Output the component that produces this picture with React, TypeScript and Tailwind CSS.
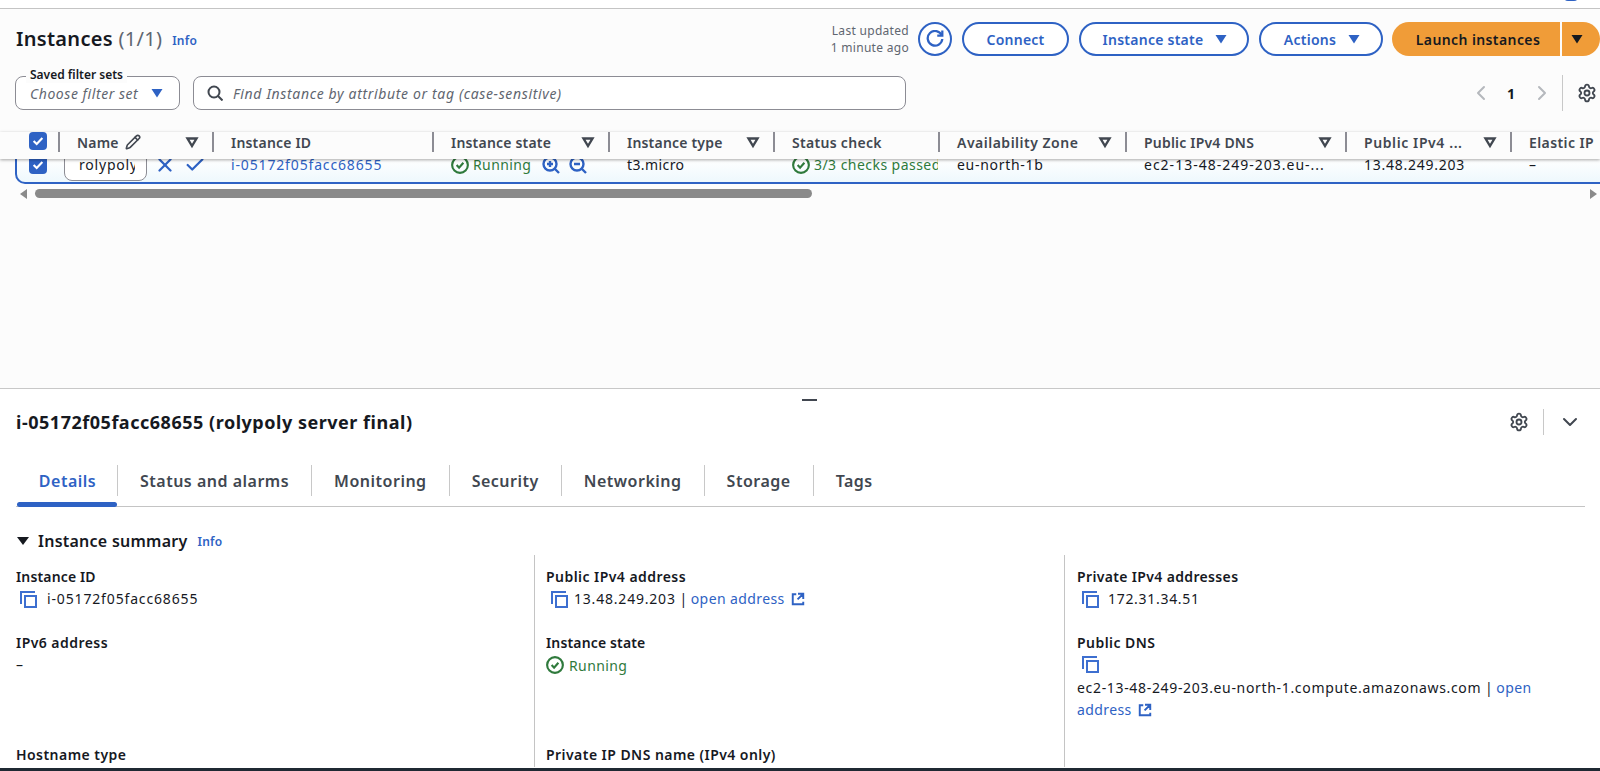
import { Check, ChevronDown, ChevronLeft, ChevronRight, Pencil, Settings, X } from "lucide-react";
import type { ReactNode } from "react";

const columns = "grid-cols-[41px_154px_220px_176px_165px_165px_187px_220px_165px_90px]";

function Caret({ className = "text-[#2e62c4]" }: { className?: string }) {
  return (
    <svg viewBox="0 0 16 16" className={`h-4 w-4 ${className}`} fill="currentColor">
      <path d="M2.5 4h11L8 12.5z" />
    </svg>
  );
}

function FilterCaret() {
  return (
    <svg viewBox="0 0 16 16" className="h-4 w-4 text-[#414750]" fill="none" stroke="currentColor" strokeWidth="2.4">
      <path d="M3.5 4.5h9L8 12z" />
    </svg>
  );
}

function CopyIcon() {
  return (
    <svg viewBox="0 0 18 18" className="h-[18px] w-[18px] shrink-0 text-[#3d6fd0]" fill="none" stroke="currentColor" strokeWidth="2">
      <path d="M2 14V2h14" />
      <rect x="6" y="6" width="11" height="11" />
    </svg>
  );
}

function ExternalIcon() {
  return (
    <svg viewBox="0 0 16 16" className="ml-[6px] inline-block h-[14px] w-[14px] align-[-2px] text-[#2e62c4]" fill="none" stroke="currentColor" strokeWidth="2.2">
      <path d="M14 8V2H8M14 2 7.5 8.5M6 2.5H2V14h12v-3" />
    </svg>
  );
}

function StatusIcon() {
  return (
    <svg viewBox="0 0 16 16" className="h-[18px] w-[18px] shrink-0 text-[#2f7a3c]" fill="none" stroke="currentColor" strokeWidth="1.9">
      <circle cx="8" cy="8" r="7" />
      <path d="m5 8 2.2 2.4L11 6" />
    </svg>
  );
}

function ZoomIcon({ plus }: { plus?: boolean }) {
  return (
    <svg viewBox="0 0 18 18" className="h-[18px] w-[18px] text-[#2e62c4]" fill="none" stroke="currentColor" strokeWidth="2.4">
      <circle cx="8" cy="8" r="6.5" />
      <path d="m12.5 12.5 4.5 4.5M5 8h6" />
      {plus && <path d="M8 5v6" />}
    </svg>
  );
}

function CheckBox() {
  return (
    <span className="flex h-[18px] w-[18px] items-center justify-center rounded-[4px] bg-[#2e62c4]">
      <svg viewBox="0 0 16 16" className="h-[14px] w-[14px]" fill="none" stroke="white" strokeWidth="2.4">
        <path d="m3 8 3.5 3.5L13 4.5" />
      </svg>
    </span>
  );
}

function Head({ label, filter, track = "tracking-[0.2px]", children }: { label: string; filter?: boolean; track?: string; children?: ReactNode }) {
  return (
    <div className="flex h-[20px] items-center">
      <span className="h-[20px] w-[2px] shrink-0 bg-[#8c8c94]" />
      <span className={`ml-[17px] text-[14px] font-semibold text-[#414750] ${track}`}>{label}</span>
      {children}
      {filter && (
        <span className="ml-auto mr-[12px]">
          <FilterCaret />
        </span>
      )}
    </div>
  );
}

function OutlineButton({ label, caret, width }: { label: string; caret?: boolean; width: string }) {
  return (
    <button className={`flex h-[34px] items-center justify-center gap-[10px] rounded-full border-2 border-[#2e62c4] bg-white text-[14px] font-semibold tracking-[0.25px] text-[#2e62c4] ${width} ${caret ? "pl-[4px]" : ""}`}>
      {label}
      {caret && <Caret />}
    </button>
  );
}

function Label({ children, track = "tracking-[0.45px]" }: { children: ReactNode; track?: string }) {
  return <div className={`h-[20px] text-[14px] leading-[20px] font-semibold text-[#16191f] ${track}`}>{children}</div>;
}

function Copyable({ value, link, pad, track, gap = "gap-[9px]" }: { value: string; link?: boolean; pad: string; track: string; gap?: string }) {
  return (
    <div className={`mt-[2px] flex h-[20px] items-center text-[14px] leading-[20px] ${gap} ${pad}`}>
      <CopyIcon />
      <span className="tracking-[0.4px]">
        <span className={track}>{value}</span>
        {link && (
          <>
            <span className="tracking-normal">{" | "}</span>
            <span className="text-[#2e62c4]">
              open address
              <ExternalIcon />
            </span>
          </>
        )}
      </span>
    </div>
  );
}

export default function App() {
  const tabs = ["Status and alarms", "Monitoring", "Security", "Networking", "Storage", "Tags"];

  return (
    <div className="relative flex h-[771px] w-[1600px] flex-col overflow-hidden bg-white font-['Noto_Sans',sans-serif] text-[#16191f]">
      <div className="relative h-[9px] border-b border-[#c4c4c4] bg-white">
        <span className="absolute top-[-7px] left-[1564px] h-[8px] w-[14px] rounded-full bg-[#2e62c4]" />
      </div>

      <section className="h-[380px] border-b border-[#c8c8c8] bg-[#fcfcfc]">
        <div className="flex items-center pt-[13px] pr-0 pl-[16px]">
          <h1 className="text-[20px] leading-[34px] font-semibold tracking-[0.3px]">
            Instances <span className="font-normal text-[#5f6670]">(1/1)</span>
          </h1>
          <span className="mt-[3px] ml-[10px] text-[12px] font-semibold tracking-[0.2px] text-[#2e62c4]">Info</span>
          <div className="ml-auto mr-[9px] text-right text-[12px] leading-[17px] tracking-[0.3px] text-[#5f6670]">
            <div>Last updated</div>
            <div>1 minute ago</div>
          </div>
          <button className="flex h-[34px] w-[34px] items-center justify-center rounded-full border-2 border-[#2e62c4] bg-white text-[#2e62c4]">
            <svg viewBox="0 0 16 16" className="h-[18px] w-[18px]" fill="none" stroke="currentColor" strokeWidth="2">
              <path d="M10 5h4.5V.5" />
              <path d="M14.5 8A6.5 6.5 0 1 1 14 4.8" />
            </svg>
          </button>
          <div className="ml-[10px] flex items-center gap-[10px]">
            <OutlineButton label="Connect" width="w-[107px]" />
            <OutlineButton label="Instance state" caret width="w-[170px]" />
            <OutlineButton label="Actions" caret width="w-[124px]" />
          </div>
          <div className="ml-[9px] flex h-[34px] items-center">
            <button className="h-[34px] w-[168px] rounded-l-full bg-[#f09c38] pl-[4px] text-[14px] font-semibold tracking-[0.4px] text-[#16191f]">Launch instances</button>
            <button className="ml-[2px] flex h-[34px] w-[38px] items-center rounded-r-full bg-[#f09c38] pl-[7px]">
              <Caret className="text-[#16191f]" />
            </button>
          </div>
        </div>

        <div className="mt-[20px] flex h-[34px] items-center pl-[15px]">
          <div className="relative flex h-[34px] w-[165px] items-center justify-between rounded-[8px] border border-[#8c8c94] bg-white pr-[14px] pl-[14px] text-[14px] tracking-[0.55px] text-[#5f6670] italic">
            <span className="absolute top-[-11px] left-[10px] bg-[#fcfcfc] px-[4px] text-[12px] leading-[17px] font-semibold tracking-normal text-[#16191f] not-italic">Saved filter sets</span>
            Choose filter set
            <Caret />
          </div>
          <div className="ml-[13px] flex h-[34px] w-[713px] items-center rounded-[8px] border border-[#8c8c94] bg-white pl-[13px] text-[14px] tracking-[0.65px] text-[#5f6670] italic">
            <svg viewBox="0 0 16 16" className="mr-[10px] h-[16px] w-[16px] text-[#414750]" fill="none" stroke="currentColor" strokeWidth="2">
              <circle cx="7" cy="7" r="5.5" />
              <path d="m11 11 4.5 4.5" />
            </svg>
            Find Instance by attribute or tag (case-sensitive)
          </div>
          <ChevronLeft className="ml-[563px] h-[24px] w-[24px] text-[#b5b8bd]" />
          <span className="ml-[14px] w-[10px] text-[14px] font-bold">1</span>
          <ChevronRight className="ml-[13px] h-[24px] w-[24px] text-[#b5b8bd]" />
          <span className="ml-[8px] h-[36px] w-px bg-[#c8c8c8]" />
          <Settings className="ml-[14px] h-[20px] w-[20px] shrink-0 text-[#414750]" strokeWidth={2.2} />
        </div>

        <div className={`relative z-10 mt-[22px] grid h-[27px] w-[1600px] pl-[17px] shadow-[0_1px_3px_rgba(0,0,0,0.35)] ${columns}`}>
          <div className="pl-[12px]">
            <CheckBox />
          </div>
          <Head label="Name" filter>
            <Pencil className="ml-[6px] h-[16px] w-[16px] text-[#414750]" strokeWidth={2.4} />
          </Head>
          <Head label="Instance ID" />
          <Head label="Instance state" filter />
          <Head label="Instance type" filter />
          <Head label="Status check" track="tracking-[0.3px]" />
          <Head label="Availability Zone" filter track="tracking-[0.5px]" />
          <Head label="Public IPv4 DNS" filter />
          <Head label="Public IPv4 ..." filter track="tracking-[0.6px]" />
          <Head label="Elastic IP" track="tracking-[0.4px]" />
        </div>

        <div className="ml-[15px] h-[25px] w-[1600px] overflow-hidden rounded-bl-[10px] border-b-2 border-l-2 border-[#2e62c4] bg-gradient-to-b from-white to-[#eef8fd]">
          <div className={`grid h-[11px] grid-rows-[11px] items-center text-[14px] leading-[11px] tracking-[0.4px] ${columns}`}>
            <div className="pl-[12px]">
              <CheckBox />
            </div>
            <div className="flex items-center">
              <span className="ml-[6px] flex h-[32px] w-[83px] shrink-0 items-center rounded-[8px] border border-[#8c8c94] bg-white pl-[14px]">
                <span className="w-[56px] overflow-hidden leading-[20px] tracking-[0.8px] whitespace-nowrap">rolypoly</span>
              </span>
              <X className="ml-[7px] h-[22px] w-[22px] text-[#2e62c4]" strokeWidth={2.4} />
              <Check className="ml-[8px] h-[22px] w-[22px] text-[#2e62c4]" strokeWidth={2.4} />
            </div>
            <div className="pl-[19px] tracking-[0.85px] text-[#2e62c4]">i-05172f05facc68655</div>
            <div className="flex items-center pl-[19px] text-[#2f7a3c]">
              <StatusIcon />
              <span className="ml-[4px]">Running</span>
              <span className="ml-[11px] flex gap-[9px]">
                <ZoomIcon plus />
                <ZoomIcon />
              </span>
            </div>
            <div className="pl-[19px]">t3.micro</div>
            <div className="flex h-[20px] items-center overflow-hidden pl-[19px] leading-[20px] tracking-[0.45px] whitespace-nowrap text-[#2f7a3c]">
              <StatusIcon />
              <span className="ml-[4px]">3/3 checks passed</span>
            </div>
            <div className="pl-[19px] tracking-[0.7px]">eu-north-1b</div>
            <div className="pl-[19px] tracking-[1px]">ec2-13-48-249-203.eu-...</div>
            <div className="pl-[19px] tracking-[0.75px]">13.48.249.203</div>
            <div className="pl-[19px]">–</div>
          </div>
        </div>

        <div className="mt-[5px] flex h-[9px] items-center pl-[20px]">
          <span className="h-0 w-0 border-y-[5px] border-r-[7px] border-y-transparent border-r-[#8a8a8a]" />
          <span className="ml-[8px] h-[9px] w-[777px] rounded-full bg-[#8a8a8a]" />
          <span className="ml-auto mr-[3px] h-0 w-0 border-y-[5px] border-l-[7px] border-y-transparent border-l-[#8a8a8a]" />
        </div>
      </section>

      <section className="relative flex-1 bg-white">
        <span className="absolute top-[10px] left-[802px] h-[2px] w-[15px] bg-[#414750]" />
        <div className="mt-[20px] flex h-[26px] items-center pr-[18px] pl-[16px]">
          <h2 className="text-[18px] font-bold tracking-[0.52px]">i-05172f05facc68655 (rolypoly server final)</h2>
          <Settings className="ml-auto h-[20px] w-[20px] text-[#414750]" strokeWidth={2.2} />
          <span className="mx-[14px] h-[26px] w-px bg-[#c8c8c8]" />
          <ChevronDown className="h-[24px] w-[24px] text-[#414750]" strokeWidth={2} />
        </div>

        <div className="relative mt-[30px] ml-[16px] flex h-[42px] w-[1569px] border-b border-[#c4c4c4] text-[16px] font-semibold tracking-[0.5px] text-[#414750]">
          <span className="absolute bottom-[-1px] left-[1px] h-[5px] w-[100px] rounded-full bg-[#2e62c4]" />
          <div className="flex h-[31px] w-[102px] items-center justify-center border-r border-[#c8c8c8] pl-[2px] text-[#2e62c4]">Details</div>
          {tabs.map((tab) => (
            <div key={tab} className="flex h-[31px] items-center border-r border-[#c8c8c8] px-[22px] last:border-r-0">
              {tab}
            </div>
          ))}
        </div>

        <div className="mt-[22px] flex h-[24px] items-center pl-[17px]">
          <span className="h-0 w-0 border-x-[6px] border-t-[8px] border-x-transparent border-t-[#16191f]" />
          <span className="ml-[9px] text-[16px] font-semibold tracking-[0.25px]">Instance summary</span>
          <span className="mt-[2px] ml-[10px] text-[12px] font-semibold tracking-[0.2px] text-[#2e62c4]">Info</span>
        </div>

        <div className="mt-[2px] flex h-[212px] text-[14px]">
          <div className="w-[534px] pt-[12px] pl-[16px]">
            <div className="h-[66px]">
              <Label track="tracking-[0.15px]">Instance ID</Label>
              <Copyable value="i-05172f05facc68655" pad="pl-[3px]" track="tracking-[0.85px]" gap="gap-[10px]" />
            </div>
            <div className="h-[112px]">
              <Label>IPv6 address</Label>
              <div className="mt-[2px] leading-[20px]">–</div>
            </div>
            <Label>Hostname type</Label>
          </div>
          <div className="w-[530px] border-l border-[#c4c4c4] pt-[12px] pl-[11px]">
            <div className="h-[66px]">
              <Label>Public IPv4 address</Label>
              <Copyable value="13.48.249.203" link pad="pl-[4px]" track="tracking-[0.8px]" gap="gap-[6px]" />
            </div>
            <div className="h-[112px]">
              <Label track="tracking-[0.15px]">Instance state</Label>
              <div className="mt-[2px] flex h-[20px] items-center gap-[5px] tracking-[0.4px] text-[#2f7a3c]">
                <StatusIcon />
                Running
              </div>
            </div>
            <Label>Private IP DNS name (IPv4 only)</Label>
          </div>
          <div className="flex-1 border-l border-[#c4c4c4] pt-[12px] pr-[26px] pl-[12px]">
            <div className="h-[66px]">
              <Label track="tracking-[0.35px]">Private IPv4 addresses</Label>
              <Copyable value="172.31.34.51" pad="pl-[4px]" track="tracking-[0.7px]" />
            </div>
            <Label>Public DNS</Label>
            <div className="mt-[2px] h-[22px] pl-[4px]">
              <CopyIcon />
            </div>
            <div className="text-[14px] leading-[22px] tracking-[0.4px]">
              <div>
                <span className="tracking-[0.67px]">ec2-13-48-249-203.eu-north-1.compute.amazonaws.com</span>
                <span className="tracking-normal">{" | "}</span>
                <span className="text-[#2e62c4]">open</span>
              </div>
              <div className="text-[#2e62c4]">
                address
                <ExternalIcon />
              </div>
            </div>
          </div>
        </div>
      </section>

      <div className="h-[3px] bg-[#1f2933]" />
    </div>
  );
}
